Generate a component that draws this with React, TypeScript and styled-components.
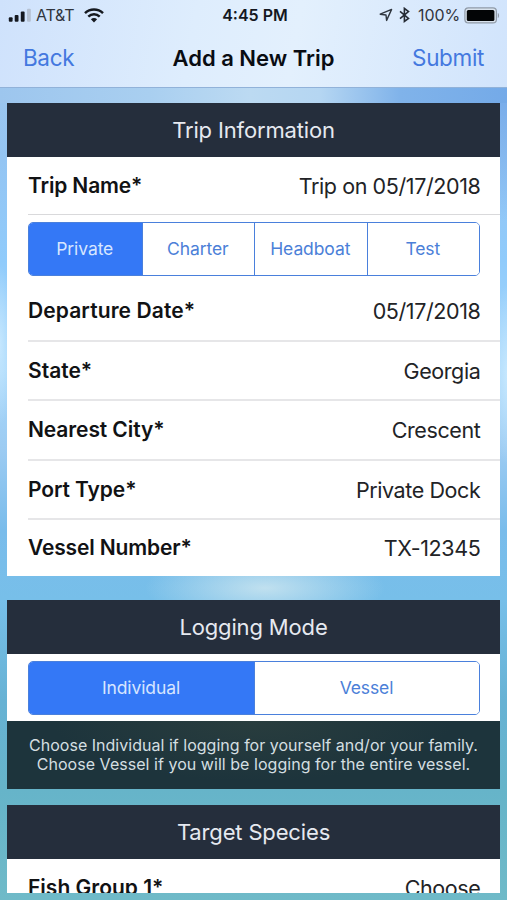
import React from "react";
import styled, { createGlobalStyle } from "styled-components";

const GlobalStyle = createGlobalStyle`
  * { box-sizing: border-box; }
  html, body { margin: 0; padding: 0; }
  body { font-family: Inter, "Liberation Sans", sans-serif; color: #111214; overflow: hidden; }
`;

const Screen = styled.div`
  display: flex;
  flex-direction: column;
  width: 507px;
  height: 900px;
  overflow: hidden;
  background:
    radial-gradient(ellipse 120px 36px at 265px 588px, rgba(205, 230, 240, 0.85), transparent),
    radial-gradient(ellipse 16px 90px at 507px 375px, rgba(205, 235, 255, 0.8), transparent),
    radial-gradient(ellipse 14px 80px at 0 345px, rgba(205, 235, 255, 0.8), transparent),
    linear-gradient(90deg, #9dc6ee 0, #a9cff0 150px, #bcdaf2 250px, #b5d6f2 320px, #80b3ea 400px, #74aae8 507px) 0 0 / 100% 103px no-repeat,
    linear-gradient(180deg, transparent 100px, rgba(118, 171, 234, 0.9) 103px, transparent 220px) 100% 0 / 50% 100% no-repeat,
    linear-gradient(180deg, #9dc6ee 88px, #94c5f3 160px, #90cbfb 260px, #a8d8fb 370px, #9ccbf2 450px, #79bceb 530px, #77bfe9 600px, #67b2d4 700px, #66b4c9 790px, #6fbac8 900px);
`;

const TopBar = styled.header`
  flex: none;
  height: 88px;
  background: linear-gradient(100deg, #cfe2fc 0%, #deedfd 38%, #e3f0fd 58%, #d1e4fc 100%);
  border-bottom: 1px solid #91b2d9;
`;

const StatusBar = styled.div`
  display: grid;
  grid-template-columns: 1fr auto 1fr;
  align-items: center;
  height: 29px;
  padding: 1px 7px 0 8px;
  font-size: 16px;
`;

const StatusGroup = styled.div<{ $end?: boolean }>`
  display: flex;
  align-items: center;
  justify-content: ${(p) => (p.$end ? "flex-end" : "flex-start")};
`;

const StatusText = styled.span<{ $spacing?: number; $left?: number }>`
  margin-left: ${(p) => p.$left ?? 0}px;
  letter-spacing: ${(p) => p.$spacing ?? 0}px;
  color: #30353d;
`;

const Clock = styled.span`
  padding: 0 0 1px 2px;
  font-weight: 600;
  font-size: 16px;
  color: #14181f;
`;

const Icon = styled.svg<{ $left?: number }>`
  display: block;
  flex: none;
  margin-left: ${(p) => p.$left ?? 0}px;
`;

const NavBar = styled.nav`
  display: grid;
  grid-template-columns: 1fr auto 1fr;
  align-items: center;
  height: 58px;
  padding: 0 23px 1px;
`;

const NavTitle = styled.h1`
  margin: 0;
  font-size: 22px;
  font-weight: 600;
  color: #090c12;
`;

const NavAction = styled.a<{ $end?: boolean }>`
  justify-self: ${(p) => (p.$end ? "end" : "start")};
  font-size: 22.5px;
  letter-spacing: -0.35px;
  color: #4378df;
`;

const Content = styled.main`
  display: flex;
  flex-direction: column;
  height: 805px;
  padding: 15px 7px 0;
  overflow: hidden;
`;

const Card = styled.section<{ $gap?: number }>`
  flex: none;
  margin-bottom: ${(p) => p.$gap ?? 0}px;
`;

const CardTitle = styled.h2`
  display: flex;
  align-items: center;
  justify-content: center;
  height: 54px;
  margin: 0;
  background: #252e3c;
  color: #e6e9f0;
  font-size: 22px;
  font-weight: 400;
  letter-spacing: -0.15px;
`;

const CardBody = styled.div`
  background: #fff;
  padding-left: 21px;
`;

const Row = styled.div<{ $height: number; $top?: number; $thin?: boolean; $last?: boolean }>`
  display: flex;
  align-items: center;
  justify-content: space-between;
  height: ${(p) => p.$height}px;
  padding: ${(p) => p.$top ?? 0}px 20px 0 0;
  border-bottom: ${(p) => (p.$last ? "0" : p.$thin ? "1px solid #d9d9db" : "2px solid #e6e6e8")};
`;

const Label = styled.span<{ $spacing?: number }>`
  font-size: 21px;
  line-height: 26px;
  font-weight: 600;
  letter-spacing: ${(p) => p.$spacing ?? 0}px;
`;

const Value = styled.span`
  font-size: 21.5px;
  line-height: 26px;
  letter-spacing: -0.4px;
  margin-right: -0.4px;
  color: #222326;
`;

const SegmentWrap = styled.div<{ $bottom: number }>`
  padding: 7px 20px ${(p) => p.$bottom}px 0;
`;

const Segments = styled.div<{ $count: number }>`
  display: grid;
  grid-template-columns: repeat(${(p) => p.$count}, 1fr);
  height: 54px;
  border: 1px solid #4a80dc;
  border-radius: 5px;
  overflow: hidden;
`;

const Segment = styled.button<{ $active?: boolean }>`
  padding: 0 1px 2px 0;
  border: 0;
  border-left: 1px solid #4a80dc;
  &:first-child { border-left: 0; }
  background: ${(p) => (p.$active ? "#3478f6" : "#fff")};
  color: ${(p) => (p.$active ? "#d7e6ff" : "#4b80d8")};
  font: 400 17.5px Inter, "Liberation Sans", sans-serif;
  letter-spacing: -0.1px;
`;

const Hint = styled.p`
  display: flex;
  flex-direction: column;
  justify-content: center;
  align-items: center;
  height: 68px;
  margin: 0;
  background: radial-gradient(ellipse 200px 60px at 246px 0, #293d3e, transparent), #1d343c;
  color: #d4dfe1;
  font-size: 16px;
  line-height: 19px;
  white-space: nowrap;
`;

const HintLine = styled.span<{ $spacing: number }>`
  letter-spacing: ${(p) => p.$spacing}px;
`;

function SignalIcon() {
  return (
    <Icon width="23" height="15" viewBox="0 0 23 15">
      <rect x="0.8" y="9.2" width="3.8" height="4.6" rx="1" fill="#14181f" />
      <rect x="6.7" y="7" width="3.8" height="6.8" rx="1" fill="#14181f" />
      <rect x="12.8" y="3.5" width="3.8" height="10.3" rx="1" fill="#14181f" />
      <rect x="19" y="0.8" width="3.8" height="13" rx="1" fill="#b5c1d2" />
    </Icon>
  );
}

function WifiIcon() {
  return (
    <Icon $left={10} width="20" height="15" viewBox="0 0 20 15" fill="none" stroke="#15191f" strokeWidth="2.5">
      <path d="M1 5.2C6 .4 14 .4 19 5.2" />
      <path d="M4.3 8.6c3.3-3.1 8.1-3.1 11.4 0" />
      <path d="M10 14.5 6.9 11.2c1.8-1.6 4.4-1.6 6.2 0z" fill="#15191f" stroke="none" />
    </Icon>
  );
}

function LocationIcon() {
  return (
    <Icon width="14" height="14" viewBox="0 0 14 14">
      <path d="M1.2 6.2 12.6 1.4 7.6 12.4 7 7z" fill="none" stroke="#303740" strokeWidth="1.4" strokeLinejoin="round" />
    </Icon>
  );
}

function BluetoothIcon() {
  return (
    <Icon $left={6} width="11" height="16" viewBox="0 0 11 16">
      <path d="M1 4.4 9.5 11.4 5.4 14.4V1.4l4.1 3.2L1 11.7" fill="none" stroke="#252b34" strokeWidth="1.6" />
    </Icon>
  );
}

function BatteryIcon() {
  return (
    <Icon $left={4} width="36" height="17" viewBox="0 0 36 17">
      <rect x="0.9" y="0.9" width="31.5" height="15" rx="3.5" fill="#d8e2ed" stroke="#909ba8" strokeWidth="1.2" />
      <rect x="2.8" y="2.9" width="27.6" height="11" rx="1.5" fill="#030506" />
      <path d="M33.8 6v5c1.7-.6 1.7-4.4 0-5z" fill="#909ba8" />
    </Icon>
  );
}

const tripRows = [
  { label: "Departure Date*", value: "05/17/2018", height: 66, top: 5, spacing: 0.1 },
  { label: "State*", value: "Georgia", height: 59, top: 0, spacing: 0 },
  { label: "Nearest City*", value: "Crescent", height: 60, top: 0, spacing: -0.1 },
  { label: "Port Type*", value: "Private Dock", height: 59, top: 0, spacing: -0.1 },
  { label: "Vessel Number*", value: "TX-12345", height: 56, top: 0, spacing: -0.15 },
];

export default function App() {
  return (
    <>
      <GlobalStyle />
      <Screen>
        <TopBar>
          <StatusBar>
            <StatusGroup>
              <SignalIcon />
              <StatusText $left={5} $spacing={-0.2}>AT&amp;T</StatusText>
              <WifiIcon />
            </StatusGroup>
            <Clock>4:45 PM</Clock>
            <StatusGroup $end>
              <LocationIcon />
              <BluetoothIcon />
              <StatusText $left={8} $spacing={-0.1}>100%</StatusText>
              <BatteryIcon />
            </StatusGroup>
          </StatusBar>
          <NavBar>
            <NavAction>Back</NavAction>
            <NavTitle>Add a New Trip</NavTitle>
            <NavAction $end>Submit</NavAction>
          </NavBar>
        </TopBar>
        <Content>
          <Card $gap={24}>
            <CardTitle>Trip Information</CardTitle>
            <CardBody>
              <Row $height={58} $thin>
                <Label $spacing={-0.15}>Trip Name*</Label>
                <Value>Trip on 05/17/2018</Value>
              </Row>
              <SegmentWrap $bottom={0}>
                <Segments $count={4}>
                  <Segment $active>Private</Segment>
                  <Segment>Charter</Segment>
                  <Segment>Headboat</Segment>
                  <Segment>Test</Segment>
                </Segments>
              </SegmentWrap>
              {tripRows.map((row, i) => (
                <Row key={row.label} $height={row.height} $top={row.top} $last={i === tripRows.length - 1}>
                  <Label $spacing={row.spacing}>{row.label}</Label>
                  <Value>{row.value}</Value>
                </Row>
              ))}
            </CardBody>
          </Card>
          <Card $gap={16}>
            <CardTitle>Logging Mode</CardTitle>
            <CardBody>
              <SegmentWrap $bottom={6}>
                <Segments $count={2}>
                  <Segment $active>Individual</Segment>
                  <Segment>Vessel</Segment>
                </Segments>
              </SegmentWrap>
            </CardBody>
            <Hint>
              <HintLine $spacing={0.02}>Choose Individual if logging for yourself and/or your family.</HintLine>
              <HintLine $spacing={0.04}>Choose Vessel if you will be logging for the entire vessel.</HintLine>
            </Hint>
          </Card>
          <Card>
            <CardTitle>Target Species</CardTitle>
            <CardBody>
              <Row $height={58} $last>
                <Label>Fish Group 1*</Label>
                <Value>Choose</Value>
              </Row>
            </CardBody>
          </Card>
        </Content>
      </Screen>
    </>
  );
}
